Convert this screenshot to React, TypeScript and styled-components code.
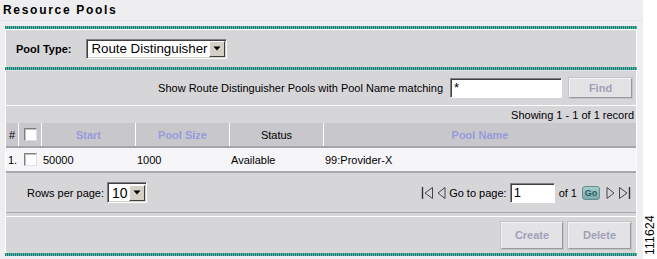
import React from "react";
import styled, { createGlobalStyle } from "styled-components";

const Global = createGlobalStyle`
  html, body { margin: 0; padding: 0; background: #ffffff; }
  body { font-family: "Liberation Sans", Arial, sans-serif; font-size: 11px; color: #000; }
`;

const Page = styled.div`
  display: flex;
  width: 657px;
  height: 259px;
  overflow: hidden;
`;

const Main = styled.div`
  width: 643px;
  height: 259px;
  background: #eeedef;
  display: flex;
  flex-direction: column;
`;

const Side = styled.div`
  flex: 1;
  background: #ffffff;
  display: flex;
  align-items: flex-end;
  justify-content: center;
  padding-bottom: 4px;
`;

const SideText = styled.div`
  writing-mode: vertical-rl;
  transform: rotate(180deg);
  font-family: "Liberation Sans", Arial, sans-serif;
  font-size: 12px;
  letter-spacing: 0.3px;
  color: #000;
`;

const Title = styled.div`
  height: 21px;
  padding: 3px 0 0 3px;
  box-sizing: border-box;
  font-weight: bold;
  font-size: 12px;
  letter-spacing: 1.7px;
  border-bottom: 1px solid #e8e2e8;
`;

const Panel = styled.div`
  margin: 5px 0 0 5px;
  width: 632px;
  display: flex;
  flex-direction: column;
`;

const TealBar = styled.div`
  height: 3px;
  background: repeating-linear-gradient(
    90deg,
    #1e7c74 0px,
    #1e7c74 1px,
    #5fb3a6 1px,
    #5fb3a6 2px
  );
`;

const Box = styled.div`
  background: #d6d5d8;
  border-left: 1px solid #ffffff;
  border-right: 1px solid #ffffff;
  display: flex;
  flex-direction: column;
`;

const PoolTypeRow = styled.div`
  height: 38px;
  border-top: 1px solid #ffffff;
  box-sizing: border-box;
  display: flex;
  align-items: center;
  padding-left: 10px;
  gap: 15px;
`;

const BoldLabel = styled.span`
  font-weight: bold;
  font-size: 11px;
`;

const SelectBox = styled.div<{ $w: number; $h?: number; $fs?: number }>`
  width: ${(p) => p.$w}px;
  height: ${(p) => p.$h ?? 20}px;
  box-sizing: border-box;
  background: #ffffff;
  border-top: 1px solid #808080;
  border-left: 1px solid #808080;
  border-bottom: 1px solid #ffffff;
  border-right: 1px solid #ffffff;
  box-shadow: inset 1px 1px 0 #404040, inset -1px -1px 0 #d4d0c8;
  display: flex;
  align-items: center;
  padding-left: 4px;
  font-size: ${(p) => p.$fs ?? 13.3}px;
`;

const SelectText = styled.span`
  flex: 1;
  white-space: nowrap;
`;

const SelectArrow = styled.div`
  width: 16px;
  height: 16px;
  margin-right: 1px;
  box-sizing: border-box;
  background: #d4d0c8;
  border-top: 1px solid #ffffff;
  border-left: 1px solid #ffffff;
  border-right: 1px solid #404040;
  border-bottom: 1px solid #404040;
  display: flex;
  align-items: center;
  justify-content: center;
`;

const SearchRow = styled.div`
  height: 36px;
  border-top: 1px solid #dfe5e8;
  border-bottom: 1px solid #ffffff;
  box-sizing: border-box;
  display: flex;
  align-items: center;
  justify-content: flex-end;
  padding-right: 4px;
  gap: 7px;
`;

const TextInput = styled.div<{ $w: number }>`
  width: ${(p) => p.$w}px;
  height: 20px;
  box-sizing: border-box;
  background: #ffffff;
  border-top: 1px solid #808080;
  border-left: 1px solid #808080;
  border-bottom: 1px solid #ffffff;
  border-right: 1px solid #ffffff;
  box-shadow: inset 1px 1px 0 #404040;
  padding: 2px 0 0 3px;
  font-size: 13px;
  line-height: 14px;
`;

const GrayButton = styled.div<{ $w: number; $h: number }>`
  width: ${(p) => p.$w}px;
  height: ${(p) => p.$h}px;
  box-sizing: border-box;
  background: #e3e2e5;
  border-top: 1px solid #f4f4f4;
  border-left: 1px solid #f4f4f4;
  border-right: 1px solid #9a9a9c;
  border-bottom: 1px solid #9a9a9c;
  box-shadow: 0 0 0 1px #c4c3c6;
  display: flex;
  align-items: center;
  justify-content: center;
  font-weight: bold;
  font-size: 11px;
  color: #a0a0b8;
`;

const CountRow = styled.div`
  height: 17px;
  display: flex;
  align-items: center;
  justify-content: flex-end;
  padding-right: 2px;
  font-size: 11px;
`;

const Grid = styled.div<{ $header?: boolean }>`
  display: grid;
  grid-template-columns: 12px 23px 94px 94px 94px 1fr;
  height: 23px;
  background: ${(p) => (p.$header ? "#c8c7cb" : "#f6f6f8")};
  border-bottom: 2px solid ${(p) => (p.$header ? "#a6a5a9" : "#a9a8ab")};
`;

const HeadCell = styled.div<{ $link?: boolean; $first?: boolean }>`
  display: flex;
  align-items: center;
  justify-content: center;
  border-left: ${(p) => (p.$first ? "none" : "1px solid #ffffff")};
  font-weight: ${(p) => (p.$link ? "bold" : "normal")};
  color: ${(p) => (p.$link ? "#9a9adb" : "#000")};
  font-size: 11px;
`;

const Cell = styled.div`
  display: flex;
  align-items: center;
  padding-left: 2px;
  font-size: 11px;
  white-space: nowrap;
`;

const CheckBox = styled.div<{ $indent?: number }>`
  width: 13px;
  height: 13px;
  box-sizing: border-box;
  background: #ffffff;
  border-top: 1px solid #808080;
  border-left: 1px solid #808080;
  border-right: 1px solid #e0e0e0;
  border-bottom: 1px solid #e0e0e0;
  box-shadow: inset 1px 1px 0 #c0c0c0;
  margin-left: ${(p) => p.$indent ?? 0}px;
`;

const PagerRow = styled.div`
  height: 39px;
  display: flex;
  align-items: center;
  justify-content: space-between;
  padding: 0 5px 0 21px;
  border-bottom: 1px solid #a9a8ab;
`;

const PagerLeft = styled.div`
  display: flex;
  align-items: center;
  gap: 3px;
`;

const PagerRight = styled.div`
  display: flex;
  align-items: center;
  gap: 3px;
`;

const NavIcon = styled.svg`
  display: block;
`;

const GoButton = styled.div`
  width: 18px;
  height: 14px;
  box-sizing: border-box;
  border-radius: 3px;
  background: linear-gradient(#a9cccc, #7fa9aa);
  border: 1px solid #5f8f90;
  color: #1d5f61;
  font-weight: bold;
  font-size: 9px;
  display: flex;
  align-items: center;
  justify-content: center;
  margin: 0 3px 0 2px;
`;

const OfText = styled.span`
  margin-left: 1px;
`;

const Spacer = styled.div`
  height: 3px;
  border-bottom: 1px solid #ffffff;
`;

const ButtonRow = styled.div`
  height: 36px;
  display: flex;
  align-items: center;
  justify-content: flex-end;
  gap: 5px;
  padding-right: 5px;
`;

const Arrow = () => (
  <svg width="8" height="5" viewBox="0 0 8 5">
    <path d="M0.5 0.5 L7.5 0.5 L4 4.5 Z" fill="#000" />
  </svg>
);

const FirstIcon = () => (
  <NavIcon width="13" height="14" viewBox="0 0 13 14">
    <path d="M1.5 1 V13" stroke="#333" strokeWidth="1.4" />
    <path d="M11.5 1.5 L4 7 L11.5 12.5 Z" fill="none" stroke="#444" strokeWidth="1" />
  </NavIcon>
);

const PrevIcon = () => (
  <NavIcon width="9" height="14" viewBox="0 0 9 14">
    <path d="M8 1.5 L1 7 L8 12.5 Z" fill="none" stroke="#444" strokeWidth="1" />
  </NavIcon>
);

const NextIcon = () => (
  <NavIcon width="9" height="14" viewBox="0 0 9 14">
    <path d="M1 1.5 L8 7 L1 12.5 Z" fill="none" stroke="#444" strokeWidth="1" />
  </NavIcon>
);

const LastIcon = () => (
  <NavIcon width="13" height="14" viewBox="0 0 13 14">
    <path d="M1.5 1.5 L9 7 L1.5 12.5 Z" fill="none" stroke="#444" strokeWidth="1" />
    <path d="M11.5 1 V13" stroke="#333" strokeWidth="1.4" />
  </NavIcon>
);

export default function App() {
  return (
    <Page>
      <Global />
      <Main>
        <Title>Resource Pools</Title>
        <Panel>
          <TealBar />
          <Box>
            <PoolTypeRow>
              <BoldLabel>Pool Type:</BoldLabel>
              <SelectBox $w={141}>
                <SelectText>Route Distinguisher</SelectText>
                <SelectArrow>
                  <Arrow />
                </SelectArrow>
              </SelectBox>
            </PoolTypeRow>
          </Box>
          <TealBar />
          <Box>
            <SearchRow>
              <span>Show Route Distinguisher Pools with Pool Name matching</span>
              <TextInput $w={112}>*</TextInput>
              <GrayButton $w={63} $h={20}>Find</GrayButton>
            </SearchRow>
            <CountRow>Showing 1 - 1 of 1 record</CountRow>
            <Grid $header>
              <HeadCell $first>#</HeadCell>
              <HeadCell>
                <CheckBox />
              </HeadCell>
              <HeadCell $link>Start</HeadCell>
              <HeadCell $link>Pool Size</HeadCell>
              <HeadCell>Status</HeadCell>
              <HeadCell $link>Pool Name</HeadCell>
            </Grid>
            <Grid>
              <Cell>1.</Cell>
              <Cell>
                <CheckBox $indent={4} />
              </Cell>
              <Cell>50000</Cell>
              <Cell>1000</Cell>
              <Cell>Available</Cell>
              <Cell>99:Provider-X</Cell>
            </Grid>
            <PagerRow>
              <PagerLeft>
                <span>Rows per page:</span>
                <SelectBox $w={40} $h={21} $fs={14}>
                  <SelectText>10</SelectText>
                  <SelectArrow>
                    <Arrow />
                  </SelectArrow>
                </SelectBox>
              </PagerLeft>
              <PagerRight>
                <FirstIcon />
                <PrevIcon />
                <span>Go to page:</span>
                <TextInput $w={45}>1</TextInput>
                <OfText>of 1</OfText>
                <GoButton>Go</GoButton>
                <NextIcon />
                <LastIcon />
              </PagerRight>
            </PagerRow>
            <Spacer />
            <ButtonRow>
              <GrayButton $w={62} $h={27}>Create</GrayButton>
              <GrayButton $w={63} $h={27}>Delete</GrayButton>
            </ButtonRow>
          </Box>
          <TealBar />
        </Panel>
      </Main>
      <Side>
        <SideText>111624</SideText>
      </Side>
    </Page>
  );
}
